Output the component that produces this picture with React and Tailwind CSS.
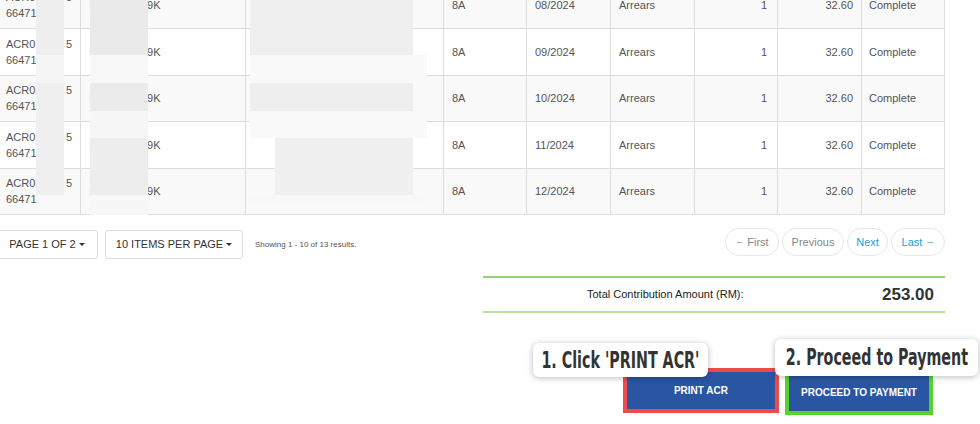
import React from 'react';

const rows = ['08/2024', '09/2024', '10/2024', '11/2024', '12/2024'];

// grey smudges that hide the personal data in the screenshot
const smudges = [
  // column 1
  { l: 36, t: 0, w: 28, h: 55, c: '#eeeeee' },
  { l: 36, t: 55, w: 28, h: 28, c: '#f5f5f5' },
  { l: 36, t: 83, w: 28, h: 112, c: '#efefef' },
  // column 2
  { l: 90, t: 0, w: 58, h: 55, c: '#eaeaea' },
  { l: 90, t: 55, w: 58, h: 28, c: '#f8f8f8' },
  { l: 90, t: 83, w: 58, h: 28, c: '#ebebeb' },
  { l: 90, t: 111, w: 58, h: 27, c: '#f6f6f6' },
  { l: 90, t: 138, w: 58, h: 57, c: '#ededed' },
  { l: 90, t: 195, w: 58, h: 20, c: '#f7f7f7' },
  // column 3
  { l: 250, t: 0, w: 163, h: 55, c: '#efefef' },
  { l: 250, t: 55, w: 177, h: 28, c: '#f9f9f9' },
  { l: 250, t: 83, w: 163, h: 28, c: '#eeeeee' },
  { l: 250, t: 111, w: 177, h: 27, c: '#f9f9f9' },
  { l: 275, t: 138, w: 138, h: 57, c: '#f0f0f0' },
  { l: 250, t: 195, w: 177, h: 10, c: '#f8f8f8' },
];

function Caret() {
  return (
    <span className="inline-block ml-[3px] align-middle w-0 h-0 border-x-[3px] border-t-[3px] border-x-transparent border-t-[#333]" />
  );
}

function Callout({ className, children }) {
  return (
    <div
      className={`absolute bg-white rounded-[6px] shadow-[0_1px_6px_rgba(0,0,0,0.28)] flex items-center justify-center text-[#333] ${className}`}
    >
      <span
        className="whitespace-nowrap text-[23px] font-bold inline-block scale-x-[0.62]"
        style={{ fontFamily: '"DejaVu Sans", "Liberation Sans", sans-serif' }}
      >
        {children}
      </span>
    </div>
  );
}

export default function App() {
  return (
    <div
      className="relative w-[980px] h-[424px] overflow-hidden bg-white text-[#555]"
      style={{ fontFamily: '"Liberation Sans", Arial, sans-serif' }}
    >
      <div className="w-[945px]">
        {/* table */}
        <div className="-mt-[18.5px] border-b border-[#ddd] text-[11px]">
          {rows.map((m, i) => (
            <div
              key={m}
              className={`grid grid-cols-[81px_165px_198px_83px_84px_84px_83px_84px_83px] h-[46.5px] border-t border-[#ddd] ${
                i % 2 === 0 ? 'bg-[#f9f9f9]' : 'bg-white'
              }`}
            >
              <div className="border-r border-[#ddd] pl-[6px] pr-[8px] flex flex-col justify-center leading-[16px]">
                <div className="flex justify-between">
                  <span>ACR0</span>
                  <span>5</span>
                </div>
                <span>66471</span>
              </div>
              <div className="border-r border-[#ddd] pl-[8px] flex items-center">
                <span className="text-[#bbb]">I</span>
                <span className="ml-[55px]">9K</span>
              </div>
              <div className="border-r border-[#ddd]" />
              <div className="border-r border-[#ddd] px-[8px] flex items-center">8A</div>
              <div className="border-r border-[#ddd] px-[8px] flex items-center">{m}</div>
              <div className="border-r border-[#ddd] px-[8px] flex items-center">Arrears</div>
              <div className="border-r border-[#ddd] pr-[10px] flex items-center justify-end">1</div>
              <div className="border-r border-[#ddd] pr-[8px] flex items-center justify-end">32.60</div>
              <div className="border-r border-[#ddd] px-[7px] flex items-center">Complete</div>
            </div>
          ))}
        </div>

        {/* pagination */}
        <div className="mt-[13px] flex items-start">
          <div className="mt-[2px] -ml-[4px] h-[29px] w-[102px] border border-[#ddd] rounded-[3px] flex items-center justify-center text-[11px] text-[#333]">
            PAGE 1 OF 2<Caret />
          </div>
          <div className="mt-[2px] ml-[7px] h-[29px] w-[138px] border border-[#ddd] rounded-[3px] flex items-center justify-center text-[11px] text-[#333]">
            10 ITEMS PER PAGE<Caret />
          </div>
          <div className="mt-[2px] h-[29px] ml-[12px] flex items-center text-[8px] text-[#555]">
            Showing 1 - 10 of 13 results.
          </div>
          <div className="ml-auto flex gap-[3px] text-[11px]">
            <div className="h-[28px] w-[54px] rounded-full border border-[#e6e6e6] flex items-center justify-center text-[#888]">
              <span className="text-[9px] mr-[3px]">←</span>First
            </div>
            <div className="h-[28px] w-[62px] rounded-full border border-[#e6e6e6] flex items-center justify-center text-[#888]">
              Previous
            </div>
            <div className="h-[28px] w-[41px] rounded-full border border-[#e6e6e6] flex items-center justify-center text-[#1c9bd6]">
              Next
            </div>
            <div className="h-[28px] w-[54px] rounded-full border border-[#e6e6e6] flex items-center justify-center text-[#1c9bd6]">
              Last<span className="text-[9px] ml-[3px]">→</span>
            </div>
          </div>
        </div>

        {/* total */}
        <div className="ml-[483px] mt-[17px] border-t-2 border-b-2 border-t-[#95d36f] border-b-[#b5e09a] h-[37px] flex items-center pl-[104px] pr-[11px] justify-between">
          <span className="text-[11px] text-[#222]">Total Contribution Amount (RM):</span>
          <span className="text-[17px] font-bold text-[#333]">253.00</span>
        </div>

        {/* actions */}
        <div className="mt-[55px] flex justify-end items-start gap-[6px] pr-[12px]">
          <button className="h-[45px] w-[156px] border-4 border-[#f04a4a] bg-[#2a55a2] text-white text-[10px] font-bold">
            PRINT ACR
          </button>
          <button className="mt-[1px] h-[46px] w-[148px] border-4 border-[#58d22e] bg-[#2a55a2] text-white text-[10px] font-bold">
            PROCEED TO PAYMENT
          </button>
        </div>
      </div>

      {smudges.map((s, i) => (
        <div
          key={i}
          className="absolute"
          style={{ left: s.l, top: s.t, width: s.w, height: s.h, background: s.c }}
        />
      ))}

      {/* callout labels */}
      <Callout className="left-[533px] top-[343px] w-[175px] h-[34px]">1. Click 'PRINT ACR'</Callout>
      <Callout className="left-[775px] top-[339px] w-[203px] h-[37px]">2. Proceed to Payment</Callout>
    </div>
  );
}
